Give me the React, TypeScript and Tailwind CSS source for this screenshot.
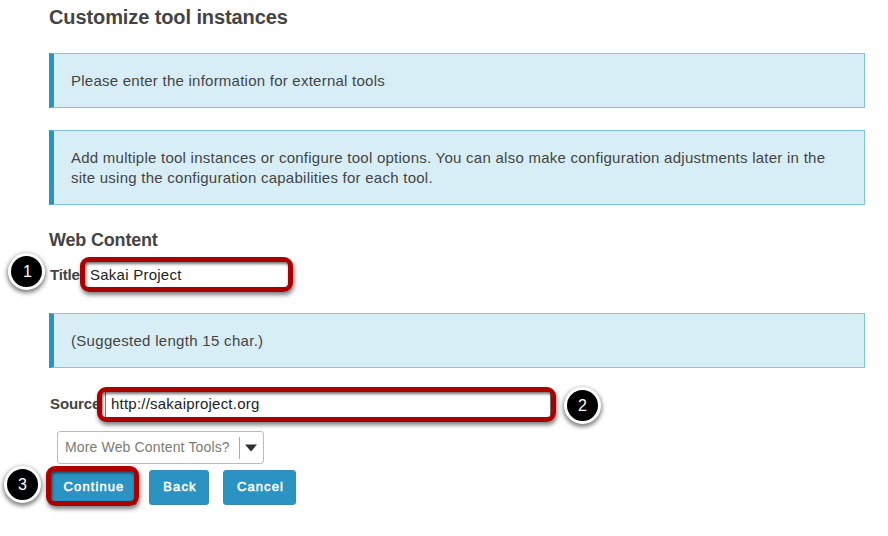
import type { ReactNode } from "react";

function Notice({ children, className }: { children: ReactNode; className: string }) {
  return (
    <div
      className={`flex w-[816px] items-center border border-l-[5px] border-[#7fc5e2] border-l-[#2a93bf] bg-[#d8eef7] pl-[17px] text-[15px] leading-5 text-[#444] ${className}`}
    >
      <p>{children}</p>
    </div>
  );
}

function Step({ n, className }: { n: number; className: string }) {
  return (
    <div
      className={`absolute flex size-[37px] items-center justify-center rounded-full border-[3px] border-white bg-black text-[16px] leading-none text-white shadow-[0_2px_4px_1px_rgba(0,0,0,0.5)] ${className}`}
    >
      {n}
    </div>
  );
}

function Highlight({ className }: { className: string }) {
  return (
    <div
      className={`pointer-events-none absolute rounded-[9px] border-[5px] border-[#ab0000] shadow-[1px_3px_4px_rgba(0,0,0,0.5),inset_1px_2px_3px_rgba(0,0,0,0.55)] ${className}`}
    />
  );
}

function Button({ children, className }: { children: ReactNode; className: string }) {
  return (
    <button
      className={`h-[35px] rounded-[3px] border border-[#3a8ab5] bg-[#2a93c1] pb-[2px] pl-[2px] text-[13px] tracking-[1.1px] text-white [-webkit-text-stroke:0.5px_white] ${className}`}
    >
      {children}
    </button>
  );
}

export default function App() {
  return (
    <main className="relative h-[536px] w-[888px] overflow-hidden bg-white pl-[49px] font-['Liberation_Sans',Arial,sans-serif] text-[#444]">
      <h1 className="h-[53px] pt-[5px] text-[20px] leading-6 font-bold tracking-[-0.1px]">
        <span>Customize tool instances</span>
      </h1>
      <Notice className="h-[55px] tracking-[0.24px]">Please enter the information for external tools</Notice>
      <Notice className="mt-[22px] h-[75px] tracking-[0.252px]">
        Add multiple tool instances or configure tool options. You can also make configuration adjustments later in the
        <br />
        site using the configuration capabilities for each tool.
      </Notice>
      <h2 className="mt-[23px] h-6 text-[18px] leading-6 font-bold tracking-[-0.18px]">
        <span>Web Content</span>
      </h2>
      <div className="mt-[10px] flex h-[26px] items-center text-[15px] leading-5">
        <label className="w-[35px] shrink-0 pl-px font-bold tracking-[-0.2px]">Title</label>
        <span className="pl-[6px] tracking-[0.25px] text-[#222]">Sakai Project</span>
      </div>
      <Notice className="mt-[25px] h-[55px] tracking-[0.3px]">(Suggested length 15 char.)</Notice>
      <div className="mt-[22px] flex h-[28px] items-center text-[15px] leading-5">
        <label className="w-[56px] shrink-0 pb-px pl-px font-bold tracking-[-0.1px]">Source</label>
        <div className="flex h-[28px] w-[446px] items-center border border-[#777] pb-px pl-[5px] text-[#222]">
          <span className="tracking-[0.22px]">http://sakaiproject.org</span>
        </div>
      </div>
      <div className="mt-[13px] ml-[8px] flex h-[33px] w-[207px] items-center rounded-[3px] border border-[#bbb] pl-[7px] text-[14px] text-[#7b7b72]">
        <span className="w-[174px] tracking-[0.15px] whitespace-nowrap">More Web Content Tools?</span>
        <div className="h-[22px] w-px bg-[#aaa]" />
        <svg className="ml-[5px]" width="12" height="8" viewBox="0 0 12 8">
          <path d="M0 0.5H12L6 7.5Z" fill="#332d2d" />
        </svg>
      </div>
      <div className="mt-[6px] flex">
        <Button className="w-[88px]">Continue</Button>
        <Button className="ml-[12px] w-[60px]">Back</Button>
        <Button className="ml-[14px] w-[73px]">Cancel</Button>
      </div>
      <Highlight className="top-[257px] left-[80px] h-[35px] w-[213px]" />
      <Highlight className="top-[387px] left-[97px] h-[35px] w-[459px]" />
      <Highlight className="top-[466px] left-[46px] h-[40px] w-[93px]" />
      <Step n={1} className="top-[253px] left-[8px] pl-[2px]" />
      <Step n={2} className="top-[387px] left-[564px]" />
      <Step n={3} className="top-[466px] left-[4px]" />
    </main>
  );
}
